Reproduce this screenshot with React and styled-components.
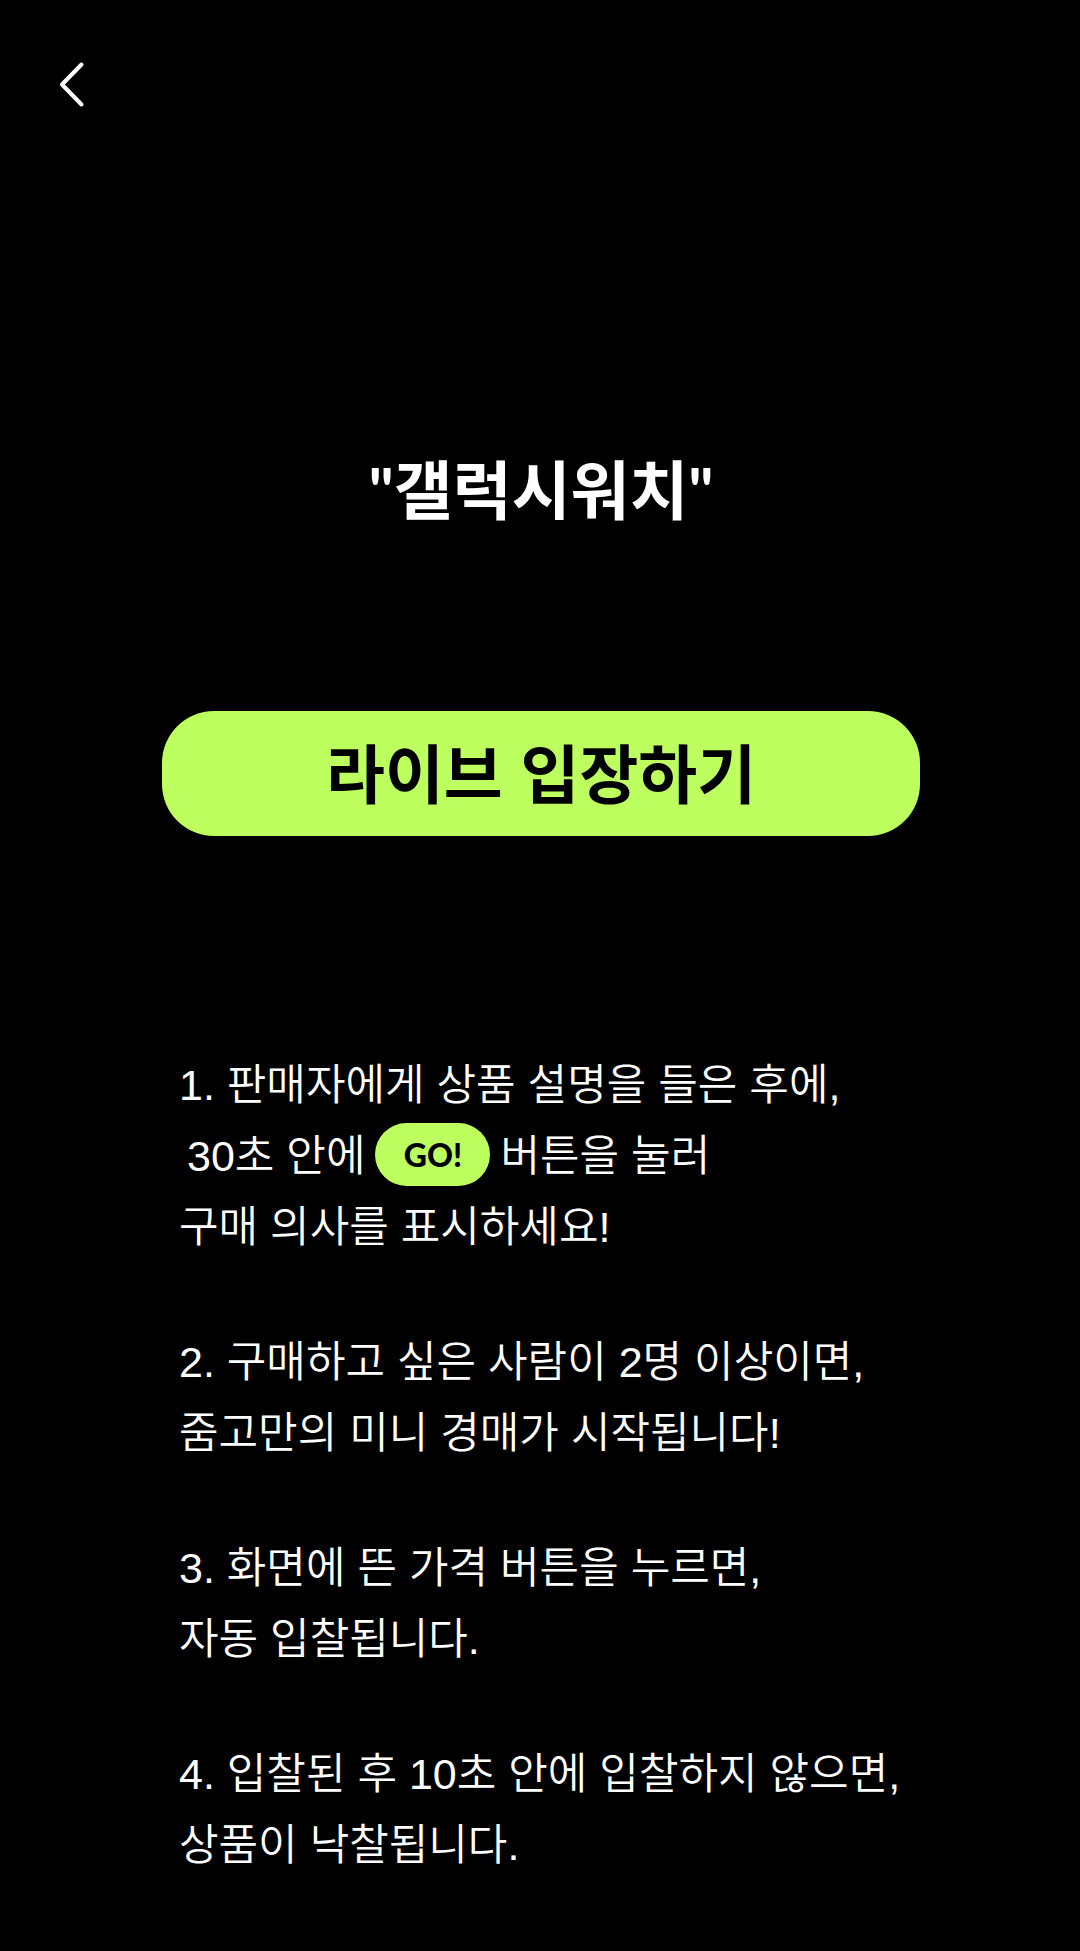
import React from "react";
import styled, { createGlobalStyle } from "styled-components";

const Global = createGlobalStyle`
  * { box-sizing: border-box; }
  body {
    margin: 0;
    background: #000;
    color: #fff;
    font-family: "Liberation Sans", "Noto Sans CJK KR", sans-serif;
  }
`;

const Screen = styled.div`
  display: flex;
  flex-direction: column;
  min-height: 100vh;
`;

const Header = styled.header`
  display: flex;
  padding: 60px 56px;
`;

const BackButton = styled.button`
  display: flex;
  padding: 0;
  border: 0;
  background: none;
  color: inherit;
  cursor: pointer;
`;

const Main = styled.main`
  display: flex;
  flex-direction: column;
  padding: 281px 14.8% 60px 15%;
`;

const Title = styled.h1`
  margin: 0;
  font-family: Lato, "Noto Sans CJK KR", sans-serif;
  font-size: 64px;
  line-height: 80px;
  font-weight: 700;
  text-align: center;
`;

const EnterButton = styled.button`
  height: 125px;
  margin-top: 181px;
  padding: 0 0 8px;
  border: 0;
  border-radius: 52px;
  background: #bdff5e;
  color: #000;
  font: inherit;
  font-size: 64px;
  font-weight: 700;
  cursor: pointer;
`;

const Steps = styled.div`
  display: flex;
  flex-direction: column;
  gap: 64px;
  margin-top: 214px;
  padding-left: 17px;
`;

const Step = styled.p`
  margin: 0;
  font-size: 43px;
  line-height: 71px;
  font-weight: 350;
  white-space: nowrap;
`;

const Line = styled.span`
  display: flex;
  align-items: center;
  gap: 10px;
  height: 71px;
  padding-left: ${(p) => (p.$indent ? "8px" : "0")};
`;

const GoBadge = styled.span`
  display: flex;
  align-items: center;
  justify-content: center;
  width: 115px;
  height: 63px;
  margin-bottom: 4px;
  border-radius: 32px;
  background: #bdff5e;
  color: #000;
  font-family: Lato, sans-serif;
  font-size: 32px;
  line-height: 60px;
  font-weight: 900;
`;

export default function App() {
  return (
    <Screen>
      <Global />
      <Header>
        <BackButton type="button" aria-label="뒤로">
          <svg width="32" height="49" viewBox="0 0 32 49" fill="none" stroke="currentColor" strokeWidth="4" strokeLinecap="round" strokeLinejoin="round">
            <path d="M25.500 4.500 6 24.500 25.500 44.500" />
          </svg>
        </BackButton>
      </Header>
      <Main>
        <Title>"갤럭시워치"</Title>
        <EnterButton type="button">라이브 입장하기</EnterButton>
        <Steps>
          <Step>
            <Line>1. 판매자에게 상품 설명을 들은 후에,</Line>
            <Line $indent>
              <span>30초 안에</span>
              <GoBadge>GO!</GoBadge>
              <span>버튼을 눌러</span>
            </Line>
            <Line>구매 의사를 표시하세요!</Line>
          </Step>
          <Step>
            <Line>2. 구매하고 싶은 사람이 2명 이상이면,</Line>
            <Line>줌고만의 미니 경매가 시작됩니다!</Line>
          </Step>
          <Step>
            <Line>3. 화면에 뜬 가격 버튼을 누르면,</Line>
            <Line>자동 입찰됩니다.</Line>
          </Step>
          <Step>
            <Line>4. 입찰된 후 10초 안에 입찰하지 않으면,</Line>
            <Line>상품이 낙찰됩니다.</Line>
          </Step>
        </Steps>
      </Main>
    </Screen>
  );
}
